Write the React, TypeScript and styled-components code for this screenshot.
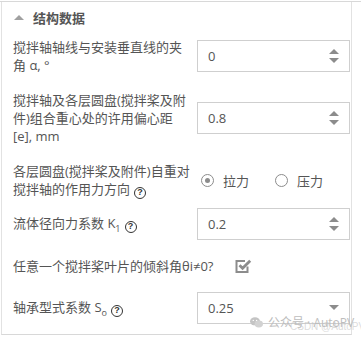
import React from 'react'
import styled, {createGlobalStyle} from 'styled-components'

const GlobalStyle = createGlobalStyle`
  html, body {
    margin: 0;
    padding: 0;
    background: #fff;
  }
  body {
    font-family: "Open Sans", "Noto Sans CJK SC", sans-serif;
    color: #555;
  }
`

const Page = styled.div`
  position: relative;
  width: 361px;
  height: 337px;
  box-sizing: border-box;
  margin-top: 1px;
  border-top: 1px solid #d8d8d8;
  padding-left: 1px;
`

const Panel = styled.div`
  width: 351px;
  box-sizing: border-box;
  border-left: 1px solid #e2e2e2;
  border-right: 1px solid #e2e2e2;
  border-bottom: 1px solid #d8d8d8;
  padding-bottom: 10px;
`

const Header = styled.div`
  display: flex;
  align-items: center;
  gap: 9px;
  height: 28px;
  padding-left: 12px;
  padding-top: 1px;
  font-size: 13px;
  font-weight: 700;
  color: #555;
`

const Chevron = styled.span`
  width: 0;
  height: 0;
  margin-top: 1px;
  border-left: 5px solid transparent;
  border-right: 5px solid transparent;
  border-bottom: 5px solid #a0a0a0;
`

const Body = styled.div`
  display: flex;
  flex-direction: column;
  padding: 7px 0 0 11px;
`

const Row = styled.div<{$gap?: number}>`
  display: flex;
  align-items: center;
  margin-bottom: ${(p) => p.$gap ?? 17}px;
  &:last-child {
    margin-bottom: 0;
  }
`

const Label = styled.div<{$free?: boolean}>`
  width: ${(p) => (p.$free ? 'auto' : '184px')};
  flex-shrink: 0;
  font-size: 13px;
  line-height: 18px;
  color: #555;
`

const Sub = styled.sub`
  font-size: 9px;
  vertical-align: -4px;
  line-height: 0;
`

const Help = styled.span`
  display: inline-flex;
  align-items: center;
  justify-content: center;
  width: 12px;
  height: 12px;
  box-sizing: border-box;
  border: 1.6px solid #333;
  border-radius: 50%;
  margin-left: 4px;
  font-family: "Liberation Sans", sans-serif;
  font-size: 9px;
  font-weight: 700;
  color: #333;
  vertical-align: -1px;
  line-height: 1;
`

const Field = styled.div`
  position: relative;
  display: flex;
  align-items: center;
  width: 153px;
  height: 32px;
  box-sizing: border-box;
  border: 1px solid #cfcfcf;
  padding: 0 10px;
  font-size: 13px;
  color: #555;
`

const Value = styled.span`
  flex: 1;
`

const Arrows = styled.div`
  display: flex;
  flex-direction: column;
  gap: 4px;
`

const Tri = styled.span<{$down?: boolean}>`
  width: 0;
  height: 0;
  border-left: 5px solid transparent;
  border-right: 5px solid transparent;
  ${(p) =>
    p.$down
      ? 'border-top: 5px solid #8c8c8c;'
      : 'border-bottom: 5px solid #8c8c8c;'}
`

const RadioGroup = styled.div`
  display: flex;
  align-items: center;
  padding-left: 4px;
  gap: 26px;
`

const RadioItem = styled.label`
  display: flex;
  align-items: center;
  gap: 9px;
  font-size: 13px;
  color: #555;
`

const RadioCircle = styled.span<{$on?: boolean}>`
  display: flex;
  align-items: center;
  justify-content: center;
  width: 13px;
  height: 13px;
  box-sizing: border-box;
  border: 1.8px solid #8c8c8c;
  border-radius: 50%;
  &::after {
    content: '';
    width: 5px;
    height: 5px;
    border-radius: 50%;
    background: ${(p) => (p.$on ? '#8c8c8c' : 'transparent')};
  }
`

const CheckWrap = styled.span`
  display: flex;
  margin-left: 22px;
`

const Watermark = styled.div`
  position: absolute;
  left: 250px;
  top: 311px;
  display: flex;
  align-items: center;
  gap: 5px;
  font-size: 12px;
  color: #bdbdbd;
  white-space: nowrap;
`

const WatermarkBack = styled.div`
  position: absolute;
  left: 290px;
  top: 319px;
  font-family: "Liberation Sans", sans-serif;
  font-size: 10px;
  color: rgba(190, 190, 190, 0.55);
  white-space: nowrap;
`

const NumberField = ({value}: {value: string}) => (
  <Field>
    <Value>{value}</Value>
    <Arrows>
      <Tri />
      <Tri $down />
    </Arrows>
  </Field>
)

const SelectField = ({value}: {value: string}) => (
  <Field>
    <Value>{value}</Value>
    <Tri $down />
  </Field>
)

const CheckIcon = () => (
  <svg width="17" height="16" viewBox="0 0 17 16">
    <path
      d="M12.5 8.5 V14 H1.5 V3 H10"
      fill="none"
      stroke="#8c8c8c"
      strokeWidth="2"
    />
    <path
      d="M4.5 7.2 L7.6 10.3 L15.2 2.7"
      fill="none"
      stroke="#8c8c8c"
      strokeWidth="2.8"
    />
  </svg>
)

const WeChatIcon = () => (
  <svg width="13" height="11" viewBox="0 0 13 11">
    <ellipse cx="5" cy="4.3" rx="5" ry="4" fill="#c4c4c4" />
    <ellipse cx="8.8" cy="7" rx="4.2" ry="3.4" fill="#d2d2d2" />
    <circle cx="3.3" cy="3.4" r="0.7" fill="#fff" />
    <circle cx="6.6" cy="3.4" r="0.7" fill="#fff" />
  </svg>
)

export default function App() {
  return (
    <Page>
      <GlobalStyle />
      <Panel>
        <Header>
          <Chevron />
          <span>结构数据</span>
        </Header>
        <Body>
          <Row>
            <Label>
              搅拌轴轴线与安装垂直线的夹
              <br />角 α, °
            </Label>
            <NumberField value="0" />
          </Row>
          <Row>
            <Label>
              搅拌轴及各层圆盘(搅拌桨及附
              <br />
              件)组合重心处的许用偏心距
              <br />
              [e], mm
            </Label>
            <NumberField value="0.8" />
          </Row>
          <Row $gap={9}>
            <Label>
              各层圆盘(搅拌桨及附件)自重对
              <br />
              搅拌轴的作用力方向
              <Help>?</Help>
            </Label>
            <RadioGroup>
              <RadioItem>
                <RadioCircle $on />
                拉力
              </RadioItem>
              <RadioItem>
                <RadioCircle />
                压力
              </RadioItem>
            </RadioGroup>
          </Row>
          <Row>
            <Label>
              流体径向力系数 K<Sub>1</Sub>
              <Help>?</Help>
            </Label>
            <NumberField value="0.2" />
          </Row>
          <Row>
            <Label $free>任意一个搅拌桨叶片的倾斜角θi≠0?</Label>
            <CheckWrap>
              <CheckIcon />
            </CheckWrap>
          </Row>
          <Row>
            <Label>
              轴承型式系数 S<Sub>o</Sub>
              <Help>?</Help>
            </Label>
            <SelectField value="0.25" />
          </Row>
        </Body>
      </Panel>
      <WatermarkBack>CSDN @AutoPV</WatermarkBack>
      <Watermark>
        <WeChatIcon />
        <span>公众号 · AutoPV</span>
      </Watermark>
    </Page>
  )
}
